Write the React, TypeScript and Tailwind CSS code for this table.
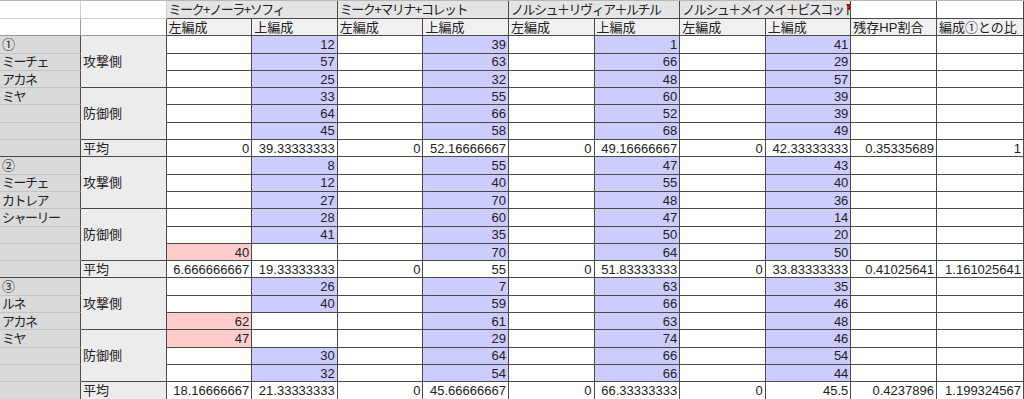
import React from "react";
import clsx from "clsx";

type Group = {
  names: string[];
  rows: string[][]; // 6 rows, columns C..J
  avg: string[]; // C..L
};

const groups: Group[] = [
  {
    names: ["①", "ミーチェ", "アカネ", "ミヤ", "", "", ""],
    rows: [
      ["", "12", "", "39", "", "1", "", "41"],
      ["", "57", "", "63", "", "66", "", "29"],
      ["", "25", "", "32", "", "48", "", "57"],
      ["", "33", "", "55", "", "60", "", "39"],
      ["", "64", "", "66", "", "52", "", "39"],
      ["", "45", "", "58", "", "68", "", "49"],
    ],
    avg: ["0", "39.33333333", "0", "52.16666667", "0", "49.16666667", "0", "42.33333333", "0.35335689", "1"],
  },
  {
    names: ["②", "ミーチェ", "カトレア", "シャーリー", "", "", ""],
    rows: [
      ["", "8", "", "55", "", "47", "", "43"],
      ["", "12", "", "40", "", "55", "", "40"],
      ["", "27", "", "70", "", "48", "", "36"],
      ["", "28", "", "60", "", "47", "", "14"],
      ["", "41", "", "35", "", "50", "", "20"],
      ["40", "", "", "70", "", "64", "", "50"],
    ],
    avg: ["6.666666667", "19.33333333", "0", "55", "0", "51.83333333", "0", "33.83333333", "0.41025641", "1.161025641"],
  },
  {
    names: ["③", "ルネ", "アカネ", "ミヤ", "", "", ""],
    rows: [
      ["", "26", "", "7", "", "63", "", "35"],
      ["", "40", "", "59", "", "66", "", "46"],
      ["62", "", "", "61", "", "63", "", "48"],
      ["47", "", "", "29", "", "74", "", "46"],
      ["", "30", "", "64", "", "66", "", "54"],
      ["", "32", "", "54", "", "66", "", "44"],
    ],
    avg: ["18.16666667", "21.33333333", "0", "45.66666667", "0", "66.33333333", "0", "45.5", "0.4237896", "1.199324567"],
  },
];

const teams = [
  "ミーク+ノーラ+ソフィ",
  "ミーク+マリナ+コレット",
  "ノルシュ＋リヴィア＋ルチル",
  "ノルシュ＋メイメイ＋ビスコッド",
];

const base =
  "flex items-center overflow-hidden whitespace-nowrap px-[2px] text-[13px] leading-none text-[#222] border-r border-b";
const dark = "border-[#4a4a4a]";

const Num = ({ v, bg }: { v: string; bg: string }) => (
  <div className={clsx(base, dark, "justify-end", bg)}>{v}</div>
);

export default function App() {
  return (
    <div className="w-[1024px] h-[399px] overflow-hidden bg-white border-t border-[#b8b8b8] font-['Liberation_Sans','Noto_Sans_CJK_JP',sans-serif]">
      <div className="grid grid-cols-[81px_repeat(10,85.6px)_1fr] grid-rows-[18px_repeat(22,17.3px)]">
        {/* header row 1 */}
        <div className={clsx(base, "border-[#cfcfcf] bg-white")}></div>
        <div className={clsx(base, "border-[#cfcfcf] bg-white")}></div>
        {teams.map((t, i) => (
          <div key={t} className={clsx(base, dark, "col-span-2 bg-[#e4e4e4] relative tracking-[-1.5px]")}>
            {t}
            {i === 3 && (
              <svg className="absolute top-[3px] right-0" width="4" height="6" viewBox="0 0 4 6">
                <polygon points="0,0 4,0 4,6" fill="#d80000" />
              </svg>
            )}
          </div>
        ))}
        <div className={clsx(base, dark, "bg-white")}></div>
        <div className={clsx(base, dark, "bg-white")}></div>

        {/* header row 2 */}
        <div className={clsx(base, "border-[#9a9a9a] bg-white")}></div>
        <div className={clsx(base, "border-[#9a9a9a] bg-white border-r-[#4a4a4a]")}></div>
        {teams.map((t) => (
          <React.Fragment key={t + "h"}>
            <div className={clsx(base, dark, "bg-[#f0f0f0]")}>左編成</div>
            <div className={clsx(base, dark, "bg-[#f0f0f0]")}>上編成</div>
          </React.Fragment>
        ))}
        <div className={clsx(base, dark, "bg-[#f0f0f0]")}>残存HP割合</div>
        <div className={clsx(base, dark, "bg-[#f0f0f0]")}>編成①との比</div>

        {groups.map((g, gi) => (
          <React.Fragment key={gi}>
            {g.rows.map((r, ri) => (
              <React.Fragment key={ri}>
                <div
                  className={clsx(
                    base,
                    "bg-[#dadada] border-r-[#4a4a4a] border-b-[#c4c4c4] tracking-[-1.5px]"
                  )}
                >
                  {g.names[ri]}
                </div>
                {ri === 0 && (
                  <div className={clsx(base, dark, "row-span-3 bg-[#ececec]")}>攻撃側</div>
                )}
                {ri === 3 && (
                  <div className={clsx(base, dark, "row-span-3 bg-[#ececec]")}>防御側</div>
                )}
                {r.map((v, ci) => (
                  <Num
                    key={ci}
                    v={v}
                    bg={
                      v === ""
                        ? "bg-white"
                        : ci === 0
                        ? "bg-[#ffcccc]"
                        : ci % 2 === 1
                        ? "bg-[#ccccff]"
                        : "bg-white"
                    }
                  />
                ))}
                <div className={clsx(base, dark, "bg-white")}></div>
                <div className={clsx(base, dark, "bg-white")}></div>
              </React.Fragment>
            ))}
            {/* average row */}
            <div className={clsx(base, "bg-[#dadada] border-r-[#4a4a4a] border-b-[#4a4a4a]")}>
              {g.names[6]}
            </div>
            <div className={clsx(base, dark, "bg-[#ececec]")}>平均</div>
            {g.avg.map((v, ci) => (
              <Num key={ci} v={v} bg="bg-white" />
            ))}
          </React.Fragment>
        ))}
      </div>
    </div>
  );
}
